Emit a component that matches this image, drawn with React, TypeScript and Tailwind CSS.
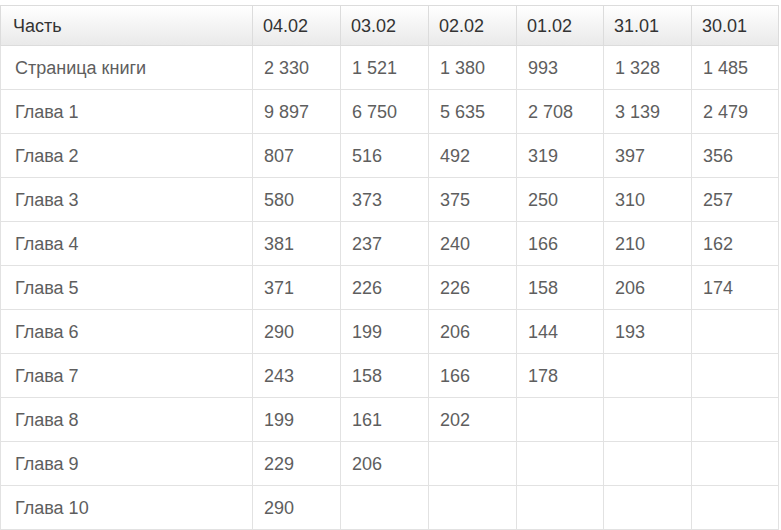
import React from 'react';

const dates = ['04.02', '03.02', '02.02', '01.02', '31.01', '30.01'];

const rows: { name: string; values: string[] }[] = [
  { name: 'Страница книги', values: ['2 330', '1 521', '1 380', '993', '1 328', '1 485'] },
  { name: 'Глава 1', values: ['9 897', '6 750', '5 635', '2 708', '3 139', '2 479'] },
  { name: 'Глава 2', values: ['807', '516', '492', '319', '397', '356'] },
  { name: 'Глава 3', values: ['580', '373', '375', '250', '310', '257'] },
  { name: 'Глава 4', values: ['381', '237', '240', '166', '210', '162'] },
  { name: 'Глава 5', values: ['371', '226', '226', '158', '206', '174'] },
  { name: 'Глава 6', values: ['290', '199', '206', '144', '193', ''] },
  { name: 'Глава 7', values: ['243', '158', '166', '178', '', ''] },
  { name: 'Глава 8', values: ['199', '161', '202', '', '', ''] },
  { name: 'Глава 9', values: ['229', '206', '', '', '', ''] },
  { name: 'Глава 10', values: ['290', '', '', '', '', ''] },
];

const widths = ['w-[252px]', 'w-[88px]', 'w-[88px]', 'w-[88px]', 'w-[87px]', 'w-[88px]', 'w-[87px]'];

export default function App() {
  return (
    <div className="w-[781px] h-[530px] bg-white overflow-hidden pt-[5px] font-['Liberation_Sans',Arial,sans-serif]">
      <table className="border-collapse table-fixed w-[779px] text-[18px]">
        <colgroup>
          {widths.map((w, i) => (
            <col key={i} className={w} />
          ))}
        </colgroup>
        <thead>
          <tr className="h-[40px] bg-gradient-to-b from-white to-[#e9e9e9]">
            <th className="border border-[#dcdcdc] text-left font-normal text-[#333] pl-[12px] pt-[1px]">Часть</th>
            {dates.map((d) => (
              <th key={d} className="border border-[#dcdcdc] text-left font-normal text-[#333] pl-[10px] pt-[1px]">
                {d}
              </th>
            ))}
          </tr>
        </thead>
        <tbody>
          {rows.map((r) => (
            <tr key={r.name} className="h-[44px]">
              <td className="border border-[#e2e2e2] text-[#5e5e5e] pl-[14px] pt-[2px]">{r.name}</td>
              {r.values.map((v, i) => (
                <td key={i} className="border border-[#e2e2e2] text-[#5e5e5e] pl-[11px] pt-[2px]">
                  {v}
                </td>
              ))}
            </tr>
          ))}
        </tbody>
      </table>
    </div>
  );
}
